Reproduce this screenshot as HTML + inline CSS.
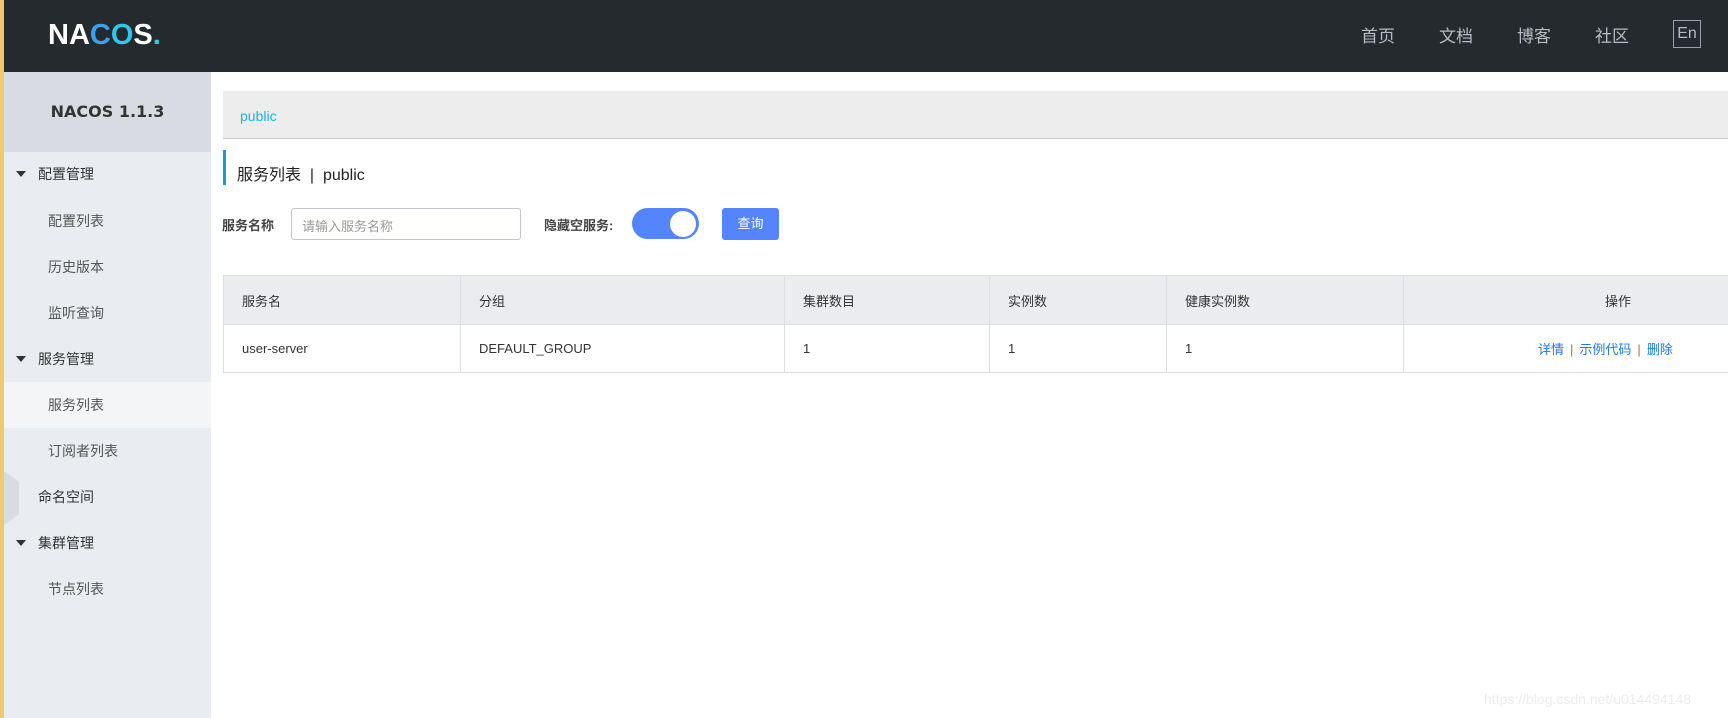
<!DOCTYPE html>
<html><head><meta charset="utf-8"><style>
*{margin:0;padding:0;box-sizing:border-box}
body{width:1728px;height:718px;overflow:hidden;background:#fff;font-family:"Liberation Sans","Noto Sans CJK SC",sans-serif;position:relative;color:#333}
.a{position:absolute;white-space:nowrap}
#stripe{left:0;top:0;width:4px;height:718px;background:#f2c86e}
#hdr{left:4px;top:0;width:1724px;height:72px;background:#252a2f}
.nav{color:#b8bcc0;font-size:17px;top:22px}
#side{left:4px;top:72px;width:207px;height:646px;background:#e9ecf0}
#side .top{position:absolute;left:0;top:0;width:207px;height:80px;background:#d8dce2;text-align:center;line-height:80px;font-weight:bold;font-size:16px;color:#333;font-family:"DejaVu Sans",sans-serif}
.mi{left:4px;width:207px;height:46px;line-height:46px;font-size:14px;color:#333}
.sub{padding-left:44px;color:#555}
.grp{padding-left:34px}
.tri{position:absolute;left:12px;top:20px;width:0;height:0;border-left:5px solid transparent;border-right:5px solid transparent;border-top:6px solid #333}
td,th{border:1px solid #dcdee3;font-size:13px;font-weight:normal;text-align:left;padding-left:18px;color:#333}
table{border-collapse:collapse;position:absolute;left:223px;top:275px}
th{height:49px;background:#ebecf0}
td{height:48px}
.lk{color:#2277dd}
.sep{color:#c07020;margin:0 6px}
</style></head><body>
<div class="a" id="stripe"></div>
<div class="a" id="hdr"></div>
<div class="a" style="left:48px;top:19px;font-size:29px;font-weight:bold;color:#fff;letter-spacing:0px;font-family:'Liberation Sans',sans-serif">NA<span style="color:#3aa0f0">C</span><span style="color:#2ec8e8">O</span>S<span style="color:#2fd0e0">.</span></div>
<div class="a nav" style="left:1361px">首页</div>
<div class="a nav" style="left:1439px">文档</div>
<div class="a nav" style="left:1517px">博客</div>
<div class="a nav" style="left:1595px">社区</div>
<div class="a" style="left:1673px;top:20px;width:28px;height:28px;border:1px solid #9aa0a6;color:#b8bcc0;font-size:16px;text-align:center;line-height:26px">En</div>
<div class="a" id="side"><div class="top">NACOS 1.1.3</div></div>
<div class="a mi grp" style="top:151px"><span class="tri"></span>配置管理</div>
<div class="a mi sub" style="top:198px">配置列表</div>
<div class="a mi sub" style="top:244px">历史版本</div>
<div class="a mi sub" style="top:290px">监听查询</div>
<div class="a mi grp" style="top:336px"><span class="tri"></span>服务管理</div>
<div class="a mi sub" style="top:382px;background:#f4f5f7">服务列表</div>
<div class="a mi sub" style="top:428px">订阅者列表</div>
<div class="a" style="left:4px;top:471px;width:15px;height:54px;background:#d8dbe0;clip-path:polygon(0 0,100% 20%,100% 80%,0 100%)"></div>
<div class="a mi grp" style="top:474px">命名空间</div>
<div class="a mi grp" style="top:520px"><span class="tri"></span>集群管理</div>
<div class="a mi sub" style="top:566px">节点列表</div>

<div class="a" style="left:223px;top:91px;width:1505px;height:48px;background:#ededed;border-bottom:1px solid #ccc"></div>
<div class="a" style="left:240px;top:108px;font-size:14px;color:#1bb4e0">public</div>
<div class="a" style="left:223px;top:150px;width:3px;height:35px;background:#1a9ad6"></div>
<div class="a" style="left:237px;top:161px;font-size:16px;color:#222">服务列表 &nbsp;|&nbsp; public</div>

<div class="a" style="left:222px;top:215px;font-size:13px;font-weight:bold;color:#444">服务名称</div>
<div class="a" style="left:291px;top:208px;width:230px;height:32px;border:1px solid #c4c6cf;border-radius:3px;font-size:13px;color:#999;padding:7px 10px">请输入服务名称</div>
<div class="a" style="left:544px;top:215px;font-size:13px;font-weight:bold;color:#444">隐藏空服务:</div>
<div class="a" style="left:632px;top:208px;width:67px;height:31px;background:#5584ff;border-radius:16px"><div style="position:absolute;right:3px;top:3px;width:26px;height:26px;border-radius:13px;background:#fff"></div></div>
<div class="a" style="left:722px;top:208px;width:57px;height:32px;background:#5584ff;border-radius:3px;color:#fff;font-size:13px;text-align:center;line-height:32px">查询</div>

<table style="width:1510px">
<tr><th style="width:237px">服务名</th><th style="width:324px">分组</th><th style="width:205px">集群数目</th><th style="width:177px">实例数</th><th style="width:237px">健康实例数</th><th style="text-align:center;padding-left:100px">操作</th></tr>
<tr><td>user-server</td><td>DEFAULT_GROUP</td><td>1</td><td>1</td><td>1</td><td style="padding-left:134px"><span class="lk">详情</span><span class="sep">|</span><span class="lk">示例代码</span><span class="sep">|</span><span class="lk">删除</span></td></tr>
</table>
<div class="a" style="left:1484px;top:691px;font-size:14px;color:#ececec">https://blog.csdn.net/u014494148</div>
</body></html>
